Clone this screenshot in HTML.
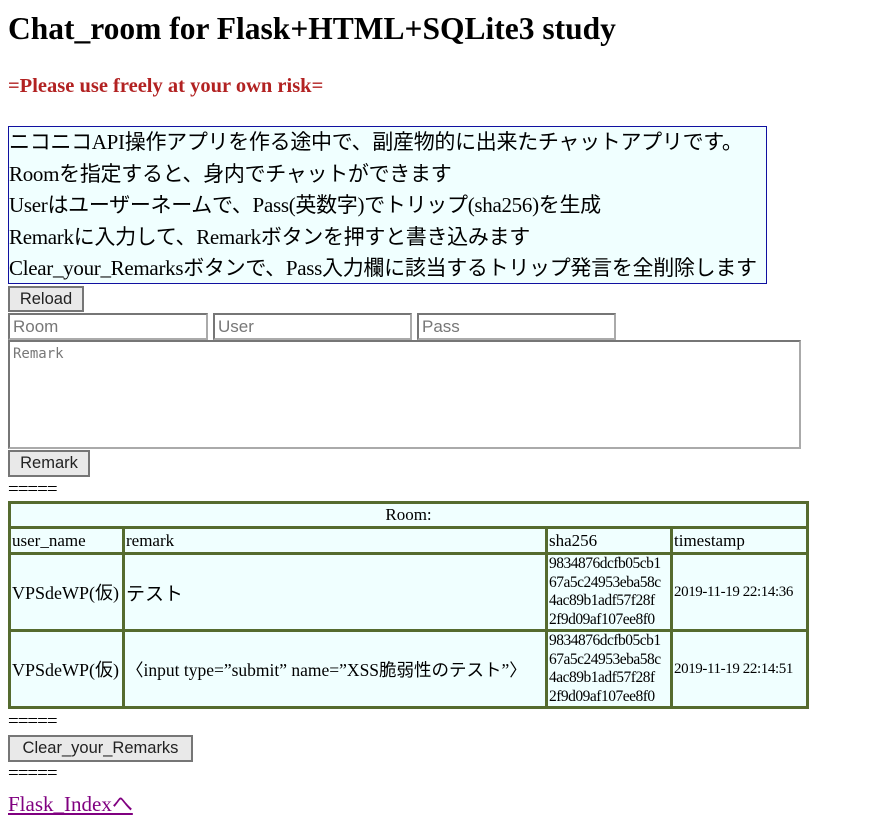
<!DOCTYPE html>
<html><head><meta charset="utf-8"><style>
body{margin:0;width:880px;height:815px;overflow:hidden;background:#fff;font-family:"Liberation Serif","Noto Sans CJK JP",serif;color:#000;position:relative}
.a{position:absolute;white-space:nowrap}
h1{position:absolute;left:8px;top:9px;margin:0;font-size:31.5px;font-weight:bold;line-height:40px}
.red{left:8px;top:74px;font-size:20.5px;font-weight:bold;color:#b22222;line-height:24px}
.box{left:8px;top:126px;width:757px;height:156px;border:1px solid #1010a0;background:#f0ffff;font-size:21px;line-height:31.5px;overflow:hidden;letter-spacing:-0.3px}
.btn{position:absolute;box-sizing:border-box;border:2px solid #767676;background:#e9e9e9;font-family:"Liberation Sans",sans-serif;font-size:16.5px;color:#222;text-align:center;line-height:23px}
.in{position:absolute;box-sizing:border-box;border:2px solid #767676;border-color:#767676 #aaa #aaa #767676;font-family:"Liberation Sans",sans-serif;font-size:17px;color:#777;padding-left:3px;line-height:23px}
.eq{left:8px;font-size:19px;line-height:16px;letter-spacing:-1px}
table{position:absolute;left:8px;top:501px;border-collapse:collapse;border:3px solid #556b2f;font-size:17px;table-layout:fixed;width:798px}
td{border:3px solid #556b2f;background:#f0ffff;padding:0 1px;white-space:nowrap;overflow:hidden}
.h{font-size:15.5px;line-height:18.5px;letter-spacing:-0.5px}
.t{font-size:15px;letter-spacing:-0.4px}
a{position:absolute;left:8px;top:788px;color:#800080;font-size:21px;text-decoration:underline}
</style></head><body>
<h1>Chat_room for Flask+HTML+SQLite3 study</h1>
<div class="a red">=Please use freely at your own risk=</div>
<div class="a box">ニコニコAPI操作アプリを作る途中で、副産物的に出来たチャットアプリです。<br>Roomを指定すると、身内でチャットができます<br>Userはユーザーネームで、Pass(英数字)でトリップ(sha256)を生成<br>Remarkに入力して、Remarkボタンを押すと書き込みます<br>Clear_your_Remarksボタンで、Pass入力欄に該当するトリップ発言を全削除します</div>
<div class="btn" style="left:8px;top:286px;width:76px;height:26px">Reload</div>
<div class="in" style="left:8px;top:313px;width:200px;height:27px">Room</div>
<div class="in" style="left:213px;top:313px;width:199px;height:27px">User</div>
<div class="in" style="left:417px;top:313px;width:199px;height:27px">Pass</div>
<div class="in" style="left:8px;top:340px;width:793px;height:109px;font-family:'DejaVu Sans Mono',monospace;font-size:14px;padding:4px 3px;line-height:17px">Remark</div>
<div class="btn" style="left:8px;top:450px;width:82px;height:27px">Remark</div>
<div class="a eq" style="top:482px">=====</div>
<table>
<colgroup><col style="width:114px"><col style="width:423px"><col style="width:125px"><col style="width:136px"></colgroup>
<tr style="height:25px"><td colspan="4" style="text-align:center">Room:</td></tr>
<tr style="height:26px"><td>user_name</td><td>remark</td><td>sha256</td><td>timestamp</td></tr>
<tr style="height:75px"><td style="font-size:18px">VPSdeWP(仮)</td><td style="font-size:19px">テスト</td><td class="h">9834876dcfb05cb1<br>67a5c24953eba58c<br>4ac89b1adf57f28f<br>2f9d09af107ee8f0</td><td class="t">2019-11-19 22:14:36</td></tr>
<tr style="height:75px"><td style="font-size:18px">VPSdeWP(仮)</td><td style="font-size:17.5px">〈input type=”submit” name=”XSS脆弱性のテスト”〉</td><td class="h">9834876dcfb05cb1<br>67a5c24953eba58c<br>4ac89b1adf57f28f<br>2f9d09af107ee8f0</td><td class="t">2019-11-19 22:14:51</td></tr>
</table>
<div class="a eq" style="top:714px">=====</div>
<div class="btn" style="left:8px;top:735px;width:185px;height:27px">Clear_your_Remarks</div>
<div class="a eq" style="top:766px">=====</div>
<a>Flask_Indexへ</a>
</body></html>
